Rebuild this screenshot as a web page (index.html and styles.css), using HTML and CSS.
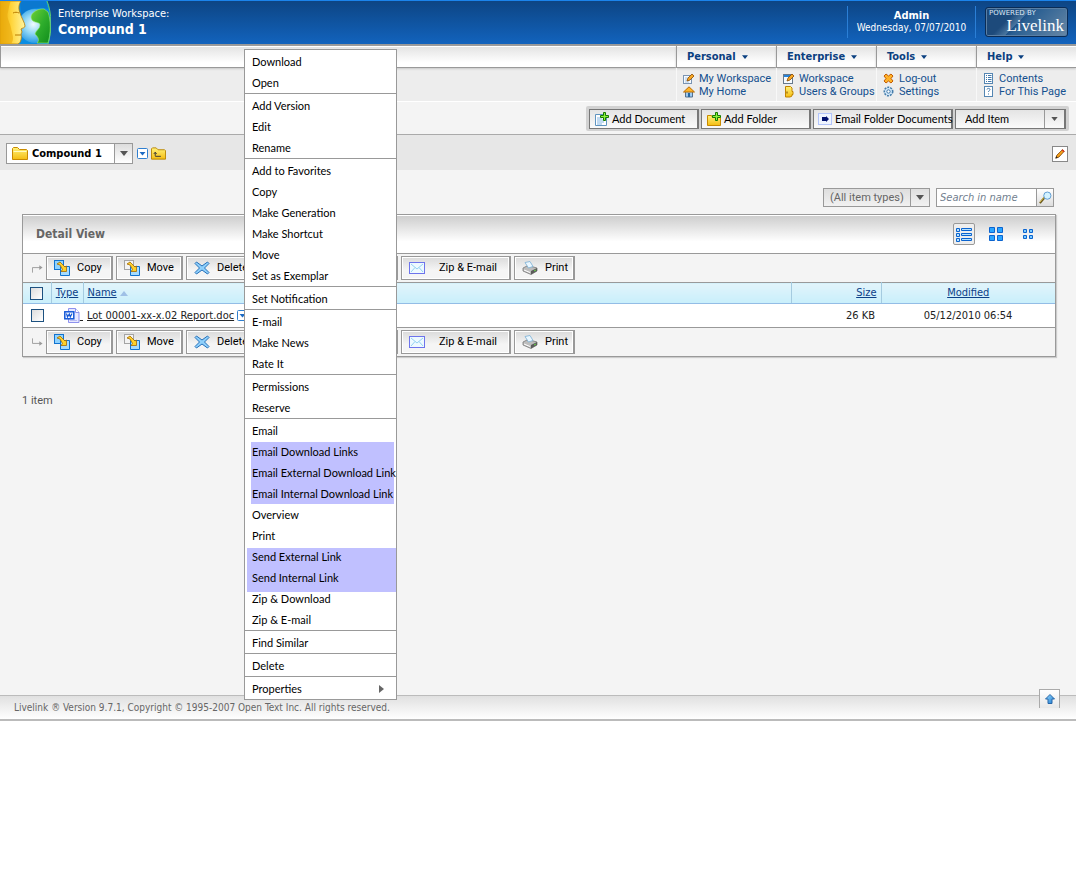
FILE: index.html
```html
<!DOCTYPE html>
<html lang="en">
<head>
<meta charset="utf-8">
<title>Compound 1</title>
<link rel="stylesheet" href="styles.css">
</head>
<body>
<svg class="sprite" aria-hidden="true">
  <defs>
    <linearGradient id="gold" x1="0" y1="0" x2="0" y2="1"><stop offset="0" stop-color="#fff27a"/><stop offset="1" stop-color="#f5bd12"/></linearGradient>
    <linearGradient id="sky" x1="0" y1="0" x2="1" y2="1"><stop offset="0" stop-color="#9adcff"/><stop offset="1" stop-color="#1b78d0"/></linearGradient>
  </defs>
  <symbol id="i-down" viewBox="0 0 8 5"><path d="M0 0h8L4 5z"/></symbol>
  <symbol id="i-folder" viewBox="0 0 16 13"><path d="M.5 12.500V1.500l1-1h4l2 2h7l1 1v9z" fill="url(#gold)" stroke="#c98a00"/><path d="M1.500 4.500h13" stroke="#fffbc0"/></symbol>
  <symbol id="i-up-folder" viewBox="0 0 16 13"><path d="M.5 12.500V1.500l1-1h4l2 2h7l1 1v9z" fill="url(#gold)" stroke="#b98500"/><path d="M4.500 9V6M3 7l1.500-2L6 7M4.500 9.500h6" fill="none" stroke="#333"/></symbol>
  <symbol id="i-boxdown" viewBox="0 0 11 11"><rect x=".5" y=".5" width="10" height="10" rx="1" fill="#fff" stroke="#2f7fd0"/><path d="M2.500 4h6L5.500 7.500z" fill="#1c6bc4"/></symbol>
  <symbol id="i-pencil" viewBox="0 0 12 12"><path d="M1 11l1.200-3.500L9 .800l2 2L4.500 9.800z" fill="#f9a51a" stroke="#7a3b00"/><path d="M8.500 1l2.500 2.300" stroke="#d8301c" stroke-width="1.500"/><path d="M.5 11.500l1-2.800 1.800 1.600z" fill="#222"/></symbol>
  <symbol id="i-sheet" viewBox="0 0 12 12"><rect x=".5" y="2.500" width="8" height="8" fill="#f5faff" stroke="#7a94b3"/><path d="M2 5h5M2 7h5M2 9h4" stroke="#a8c4e2"/><path d="M4 8l1-3 4-4 2 2-4 4z" fill="#f7a825" stroke="#8a4a00" stroke-width=".8"/></symbol>
  <symbol id="i-window" viewBox="0 0 12 12"><rect x=".5" y="1.500" width="9" height="9" fill="#f5faff" stroke="#66788c"/><path d="M1 3h8" stroke="#2582d8" stroke-width="2"/><path d="M4 8l1-3 4-4 2 2-4 4z" fill="#f7a825" stroke="#8a4a00" stroke-width=".8"/></symbol>
  <symbol id="i-home" viewBox="0 0 12 12"><path d="M2.500 5.500h7v5.500h-7z" fill="#9ccaf2" stroke="#55708d"/><path d="M5 7h2v4H5z" fill="#27669f"/><path d="M.5 6L6 .800 11.500 6z" fill="#ffb52a" stroke="#b96c00"/></symbol>
  <symbol id="i-door" viewBox="0 0 12 12"><path d="M2.500 .5h5l1.500 1.500v3.500h1v3H9v1.500l-2 1H2.500z" fill="url(#gold)" stroke="#c08300"/><path d="M4 5.500v2" stroke="#7a4c00"/></symbol>
  <symbol id="i-x" viewBox="0 0 12 12"><path d="M3 1l2.500 2L8 1l2 2-2 2.500L10 8l-2 2-2.500-2L3 10 1 8l2-2.500L1 3z" fill="#ffb32a" stroke="#c45c00"/></symbol>
  <symbol id="i-gear" viewBox="0 0 12 12"><circle cx="5.500" cy="5.500" r="4.200" fill="#d5eafb" stroke="#467dab" stroke-width="1.600" stroke-dasharray="2 1"/><circle cx="5.500" cy="5.500" r="1.700" fill="#fff" stroke="#3f78aa"/></symbol>
  <symbol id="i-contents" viewBox="0 0 12 12"><rect x="1.500" y=".5" width="8" height="10" fill="#fff" stroke="#5586b2"/><path d="M3 2.500h1M5 2.500h3.500M3 4.500h1M5 4.500h3.500M3 6.500h1M5 6.500h3.500M3 8.500h1M5 8.500h3.500" stroke="#4178ab"/></symbol>
  <symbol id="i-help" viewBox="0 0 12 12"><rect x="1.500" y=".5" width="8" height="10" fill="#fff" stroke="#5586b2"/><path d="M4 3.500c0-1.500 3-1.500 3 0 0 1-1.500 1-1.500 2.500M5.500 7.500v1" fill="none" stroke="#4178ab"/></symbol>
  <symbol id="i-adddoc" viewBox="0 0 16 16"><path d="M1.500 3.500h8l3 3v8h-11z" fill="#fff" stroke="#5f94c0"/><path d="M3 7h5M3 9h7M3 11h7M3 13h5" stroke="#82b5e4"/><path d="M9.500 1.500h2v3h3v2h-3v3h-2v-3h-3v-2h3z" fill="#8df23c" stroke="#177a00"/></symbol>
  <symbol id="i-addfolder" viewBox="0 0 16 16"><path d="M1.500 14.500v-10h4l1 2h8v8z" fill="url(#gold)" stroke="#c98a00"/><path d="M9.500 1.500h2v3h3v2h-3v3h-2v-3h-3v-2h3z" fill="#8df23c" stroke="#177a00"/></symbol>
  <symbol id="i-emailfolder" viewBox="0 0 14 12"><rect x=".5" y=".5" width="13" height="11" fill="#eef4ff" stroke="#b2c4fa"/><path d="M4 4h4V3l3 3-3 3V8H4z" fill="#00106e"/></symbol>
  <symbol id="i-lens" viewBox="0 0 14 14"><path d="M1 13l5-6" stroke="#6b5a20" stroke-width="2.200"/><path d="M1 12l5-6" stroke="#e3c64e"/><circle cx="9" cy="5" r="3.900" fill="#d3f2ff" stroke="#5b98d0"/></symbol>
  <symbol id="i-list" viewBox="0 0 16 15"><g fill="#b5e2ff" stroke="#0a63cf"><path d="M.5 1.500h3v3h-3zM5.500 1.500h10v2h-10zM.5 6.500h3v3h-3zM5.500 6.500h10v2h-10zM.5 11.500h3v3h-3zM5.500 11.500h10v2h-10z"/></g></symbol>
  <symbol id="i-tiles" viewBox="0 0 14 14"><g fill="#29a5ff" stroke="#0a63cf"><path d="M.5.500h5v5h-5zM8.500.500h5v5h-5zM.5 8.500h5v5h-5zM8.500 8.500h5v5h-5z"/></g></symbol>
  <symbol id="i-small" viewBox="0 0 10 10"><g fill="#7cccff" stroke="#0a63cf"><path d="M.5.500h3v3h-3zM6.500.500h3v3h-3zM.5 6.500h3v3h-3zM6.500 6.500h3v3h-3z"/></g></symbol>
  <symbol id="i-copy" viewBox="0 0 16 16"><rect x=".5" y=".5" width="9" height="9" fill="#8ed2ff" stroke="#1173cf"/><path d="M6.500 6.500h9v9h-9z" fill="#a6dcff" stroke="#1173cf"/><path d="M3 4l3-2 5 5 1.500-1v5.500H7L8.500 9.500 6 5z" fill="#ffd12a" stroke="#a56a00" stroke-width=".8"/></symbol>
  <symbol id="i-move" viewBox="0 0 16 16"><rect x=".5" y=".5" width="9" height="9" fill="#f3f3f3" stroke="#a4a4a4"/><path d="M6.500 6.500h9v9h-9z" fill="#a6dcff" stroke="#1173cf"/><path d="M3 4l3-2 5 5 1.500-1v5.500H7L8.500 9.500 6 5z" fill="#ffd12a" stroke="#a56a00" stroke-width=".8"/></symbol>
  <symbol id="i-delete" viewBox="0 0 16 14"><path d="M2.500 1L8 5 13.500 1l1.500 1.500L10.500 7l4.500 4.500-1.500 1.500L8 9l-5.500 4L1 11.500 5.500 7 1 2.500z" fill="#8fd0fb" stroke="#246fb9"/></symbol>
  <symbol id="i-mail" viewBox="0 0 16 12"><rect x=".5" y=".5" width="15" height="11" fill="#eefaff" stroke="#6d74ec"/><path d="M2 2l6 5 6-5M2 10l4-4.500M14 10l-4-4.500" fill="none" stroke="#93d2f3"/></symbol>
  <symbol id="i-print" viewBox="0 0 16 14"><path d="M1 7l5-2.500L15 7v3l-6 3.500L1 10z" fill="#bdbdbd" stroke="#777" stroke-width=".8"/><path d="M9 10l6-3v3l-6 3.500z" fill="#5b5b5b"/><path d="M3 1.500L8 .5l3 5-4.500 1.500z" fill="#eaf7ff" stroke="#78aed4" stroke-width=".8"/><path d="M2 9l6 2.500" stroke="#fff"/><path d="M12 10l2-1" stroke="#65d747"/></symbol>
  <symbol id="i-turn" viewBox="0 0 12 9"><path d="M.5 9V3.500H9" fill="none" stroke="#999"/><path d="M8 1l3.500 2.500L8 6z" fill="#999"/></symbol>
  <symbol id="i-word" viewBox="0 0 16 16"><path d="M4.500.500h7l3.500 4v10H4.500z" fill="#e8e8ff" stroke="#8e92ee"/><path d="M11.500.500v4H15" fill="#fff" stroke="#8e92ee"/><path d="M6 12.500h7" stroke="#b9bdf4"/><rect x=".8" y="3.800" width="9" height="7" fill="#fff" stroke="#1458d8" stroke-width="1.500"/><path d="M2.500 5.500l1 3.500 1.800-3 1 3L8 5.500" fill="none" stroke="#1458d8" stroke-width="1.200"/></symbol>
  <symbol id="i-top" viewBox="0 0 10 10"><path d="M5 .5L9.500 5H7v4.500H3V5H.5z" fill="url(#sky)" stroke="#2766a8"/></symbol>
</svg>

<div class="app">
  <header class="banner">
    <svg class="logo" viewBox="0 0 51 43" role="img" aria-label="Face and globe">
      <defs>
        <linearGradient id="face" x1="0" y1="0" x2="1" y2="0"><stop offset="0" stop-color="#e9a800"/><stop offset=".45" stop-color="#ffd43a"/><stop offset="1" stop-color="#fff5a0"/></linearGradient>
        <radialGradient id="sea" cx=".45" cy=".45" r=".55"><stop offset="0" stop-color="#f0fbff"/><stop offset=".5" stop-color="#8fd6f5"/><stop offset="1" stop-color="#2b9be4"/></radialGradient>
        <linearGradient id="land" x1="0" y1="0" x2="1" y2="1"><stop offset="0" stop-color="#6fcf35"/><stop offset=".5" stop-color="#2fae2c"/><stop offset="1" stop-color="#118d1c"/></linearGradient>
      </defs>
      <path d="M0 0h47c5 12 5 30 1 43H0z" fill="#0a8de2"/>
      <path d="M20 0h26l2 8c-10-3-22 0-27 7z" fill="#0b78cf"/>
      <circle cx="35" cy="25" r="17" fill="url(#sea)"/>
      <path d="M33 12c3-3 7-4.500 11-4l4 3c3 8 3 22 0 31H37c3-3 1-6-2-9 1-4 5-5 5-9 0-3-4-2-7-4-3-3-2-6 0-8z" fill="url(#land)" stroke="#9ae76a" stroke-width=".6"/>
      <path d="M47 0c5 12 5 30 1 43" fill="none" stroke="#5ed06a"/>
      <path d="M0 0h21c-2 3-3 7-1 12 1 4 5 10 5 13 0 2-3 2-4 3l1 3-1 2c1 3 0 9-3 10H0z" fill="url(#face)" stroke="#b97b00" stroke-width=".8"/>
      <path d="M11 0H0v43h11c4-5 1-10 0-16s-5-10-3-16c1-4 1-8 3-11z" fill="#e9ab10" opacity=".65"/>
      <path d="M13 12c2-1 4-1 6 0M15 34h6" fill="none" stroke="#b97b00"/>
    </svg>
    <div class="place"><span>Enterprise Workspace:</span><h1>Compound 1</h1></div>
    <div class="user"><strong>Admin</strong><span>Wednesday, 07/07/2010</span></div>
    <div class="powered"><div class="badge"><small>POWERED BY</small><b>Livelink</b></div></div>
  </header>

  <nav class="menubar">
    <div class="blank"><div class="tab"></div></div>
    <section><button class="tab">Personal <svg><use href="#i-down"/></svg></button>
      <ul><li><svg><use href="#i-sheet"/></svg><a href="#">My Workspace</a></li><li><svg><use href="#i-home"/></svg><a href="#">My Home</a></li></ul></section>
    <section><button class="tab">Enterprise <svg><use href="#i-down"/></svg></button>
      <ul><li><svg><use href="#i-window"/></svg><a href="#">Workspace</a></li><li><svg><use href="#i-door"/></svg><a href="#">Users &amp; Groups</a></li></ul></section>
    <section><button class="tab">Tools <svg><use href="#i-down"/></svg></button>
      <ul><li><svg><use href="#i-x"/></svg><a href="#">Log-out</a></li><li><svg><use href="#i-gear"/></svg><a href="#">Settings</a></li></ul></section>
    <section><button class="tab">Help <svg><use href="#i-down"/></svg></button>
      <ul><li><svg><use href="#i-contents"/></svg><a href="#">Contents</a></li><li><svg><use href="#i-help"/></svg><a href="#">For This Page</a></li></ul></section>
  </nav>

  <div class="addbar">
    <div class="addgroup">
      <button class="add"><svg class="s16"><use href="#i-adddoc"/></svg>Add Document</button>
      <button class="add"><svg class="s16"><use href="#i-addfolder"/></svg>Add Folder</button>
      <button class="add wide"><svg class="mailicon"><use href="#i-emailfolder"/></svg>Email Folder Documents</button>
      <div class="add item"><select aria-label="Add Item"><option>Add Item</option></select><svg class="arrow"><use href="#i-down"/></svg></div>
    </div>
  </div>

  <div class="crumbs">
    <div class="crumb"><button class="name"><svg><use href="#i-folder"/></svg>Compound 1</button><button class="drop" aria-label="Open path"><svg class="arrow"><use href="#i-down"/></svg></button></div>
    <button class="bare" aria-label="Item menu"><svg class="s11"><use href="#i-boxdown"/></svg></button>
    <button class="bare" aria-label="Parent folder"><svg class="folder"><use href="#i-up-folder"/></svg></button>
    <button class="edit" aria-label="Edit"><svg><use href="#i-pencil"/></svg></button>
  </div>

  <main>
    <div class="filters">
      <div class="types"><select aria-label="Item types"><option>(All item types)</option></select><svg class="arrow"><use href="#i-down"/></svg></div>
      <div class="search"><input type="text" placeholder="Search in name" aria-label="Search in name"><button aria-label="Search"><svg><use href="#i-lens"/></svg></button></div>
    </div>

    <div class="panel">
      <div class="panelhead">
        <h2>Detail View</h2>
        <div class="views">
          <button class="on" aria-label="Detail"><svg class="v1"><use href="#i-list"/></svg></button>
          <button aria-label="Large icons"><svg class="v2"><use href="#i-tiles"/></svg></button>
          <button aria-label="Small icons"><svg class="v3"><use href="#i-small"/></svg></button>
        </div>
      </div>
      <div class="actions">
        <svg class="turn"><use href="#i-turn"/></svg>
        <button><svg class="s16"><use href="#i-copy"/></svg>Copy</button>
        <button><svg class="s16"><use href="#i-move"/></svg>Move</button>
        <button class="del"><svg class="s16"><use href="#i-delete"/></svg>Delete</button>
        <button class="zip"><svg class="s16"><use href="#i-mail"/></svg>Zip &amp; E-mail</button>
        <button class="print"><svg class="s16"><use href="#i-print"/></svg>Print</button>
      </div>
      <table>
        <colgroup><col class="c1"><col class="c2"><col><col class="c4"><col class="c5"></colgroup>
        <thead><tr><th><input type="checkbox" aria-label="Select all"></th><th><a href="#">Type</a></th><th class="left"><a href="#">Name</a> <svg class="sort" viewBox="0 0 8 5"><path d="M0 5h8L4 0z"/></svg></th><th class="right"><a href="#">Size</a></th><th><a href="#">Modified</a></th></tr></thead>
        <tbody><tr><td><input type="checkbox" aria-label="Select Lot 00001-xx-x.02 Report.doc"></td><td class="right doc"><a href="#"><svg class="s16"><use href="#i-word"/></svg>&nbsp;</a></td><td class="left"><a href="#">Lot 00001-xx-x.02 Report.doc</a> <svg class="s11"><use href="#i-boxdown"/></svg></td><td class="right">26 KB</td><td>05/12/2010 06:54</td></tr></tbody>
      </table>
      <div class="actions">
        <svg class="turn flip"><use href="#i-turn"/></svg>
        <button><svg class="s16"><use href="#i-copy"/></svg>Copy</button>
        <button><svg class="s16"><use href="#i-move"/></svg>Move</button>
        <button class="del"><svg class="s16"><use href="#i-delete"/></svg>Delete</button>
        <button class="zip"><svg class="s16"><use href="#i-mail"/></svg>Zip &amp; E-mail</button>
        <button class="print"><svg class="s16"><use href="#i-print"/></svg>Print</button>
      </div>
    </div>
    <p class="count">1 item</p>
  </main>

  <footer><span>Livelink ® Version 9.7.1, Copyright © 1995-2007 Open Text Inc. All rights reserved.</span><button class="top" aria-label="Back to top"><svg><use href="#i-top"/></svg></button></footer>

  <div class="popup" role="menu">
    <div class="group"><button role="menuitem">Download</button><button role="menuitem">Open</button></div>
    <div class="group"><button role="menuitem">Add Version</button><button role="menuitem">Edit</button><button role="menuitem">Rename</button></div>
    <div class="group"><button role="menuitem">Add to Favorites</button><button role="menuitem">Copy</button><button role="menuitem">Make Generation</button><button role="menuitem">Make Shortcut</button><button role="menuitem">Move</button><button role="menuitem">Set as Exemplar</button></div>
    <div class="group"><button role="menuitem">Set Notification</button></div>
    <div class="group"><button role="menuitem">E-mail</button><button role="menuitem">Make News</button><button role="menuitem">Rate It</button></div>
    <div class="group"><button role="menuitem">Permissions</button><button role="menuitem">Reserve</button></div>
    <div class="group"><button role="menuitem">Email</button>
      <div class="marked email"><button role="menuitem">Email Download Links</button><button role="menuitem">Email External Download Link</button><button role="menuitem">Email Internal Download Link</button></div>
      <button role="menuitem">Overview</button><button role="menuitem">Print</button>
      <div class="marked send"><button role="menuitem">Send External Link</button><button role="menuitem">Send Internal Link</button></div>
      <button role="menuitem">Zip &amp; Download</button><button role="menuitem">Zip &amp; E-mail</button></div>
    <div class="group"><button role="menuitem">Find Similar</button></div>
    <div class="group"><button role="menuitem">Delete</button></div>
    <div class="group"><button role="menuitem" class="sub">Properties<svg viewBox="0 0 5 8"><path d="M0 0v8l5-4z"/></svg></button></div>
  </div>
</div>
</body>
</html>
```

FILE: styles.css
```css
* { box-sizing: border-box; }
body { margin: 0; background: #fff; color: #222; font: 11px/14px "DejaVu Sans Condensed", Tahoma, "DejaVu Sans", sans-serif; }
button, select, input { font: inherit; color: inherit; margin: 0; padding: 0; border: 0; background: none; border-radius: 0; }
select { appearance: none; }
h1, h2, p, ul { margin: 0; padding: 0; }
ul { list-style: none; }
a { color: #0b4088; }
svg { display: block; flex: none; }
.sprite { position: absolute; width: 0; height: 0; }
.s16 { width: 16px; height: 16px; }
.s11 { width: 11px; height: 11px; }
.arrow { width: 8px; height: 5px; fill: #555; }
.app { position: relative; background: #f4f4f4; }

.banner { display: flex; height: 44px; color: #fff; background: linear-gradient(#0d4584, #1263bd); border-top: 1px solid #1b84ec; }
.logo { width: 51px; height: 43px; }
.place { flex: 1; padding: 6px 0 0 7px; }
.place h1 { font-size: 14px; line-height: 16px; }
.user { display: flex; flex-direction: column; align-items: center; width: 129px; height: 32px; margin-top: 5px; padding-top: 4px; border-left: 1px solid #2b7fd6; border-right: 1px solid #2b7fd6; font-size: 10px; line-height: 12px; }
.user strong { font-size: 11px; }
.powered { padding: 6px 8px 0 9px; }
.badge { display: flex; flex-direction: column; width: 83px; height: 30px; padding: 1px 3px; border: 1px solid #0a2c56; border-radius: 3px; background: linear-gradient(135deg, #1d4a7b 30%, #49759f 42%, #1f5288 43%, #2a5f92 48%, #6888a6); box-shadow: inset 0 0 0 1px #5a7fa4; }
.badge small { font: 7px/9px "DejaVu Sans", sans-serif; color: #dce8f4; }
.badge b { align-self: flex-end; font: 17px/16px "Liberation Serif", serif; }

.menubar { display: flex; border-top: 2px solid #999; background: #ededed; }
.menubar section { width: 100px; }
.blank { flex: 1; }
.tab { display: flex; align-items: center; width: 100%; height: 22px; padding-left: 10px; gap: 6px; font-weight: bold; color: #0b4080; background: linear-gradient(#e2e2e2, #fff 80%); border-left: 1px solid #999; border-bottom: 1px solid #999; box-shadow: inset 0 1px #fff, 0 1px 2px #c6c6c6; }
.tab svg { width: 6px; height: 4px; fill: #0b4080; }
.menubar ul { height: 33px; padding: 4px 0 0 6px; border-left: 1px solid #f8f8f8; font-family: Roboto, sans-serif; }
.menubar li { display: flex; align-items: center; gap: 4px; height: 13px; }
.menubar li svg { width: 12px; height: 12px; }
.menubar a { color: #14508f; text-decoration: none; white-space: nowrap; }

.addbar { display: flex; justify-content: flex-end; height: 34px; padding: 4px 7px 0; border-top: 1px solid #fff; border-bottom: 1px solid #aaa; background: #f4f4f4; }
.addgroup { display: flex; gap: 2px; height: 25px; padding: 3px; background: #d2d2d2; border-radius: 2px; }
.add { display: flex; align-items: center; width: 110px; height: 20px; padding-left: 4px; gap: 2px; font-family: Lato, sans-serif; font-size: 11px; color: #000; white-space: nowrap; border: 1px solid #777; border-right-width: 2px; background: linear-gradient(#e4e4e4, #fafafa); }
.add.wide { width: 140px; gap: 3px; }
.mailicon { width: 14px; height: 12px; }
.add.item { padding: 0; gap: 0; width: 111px; }
.add select { flex: 1; min-width: 0; height: 18px; padding-left: 9px; }
.add .arrow { width: 20px; height: 18px; padding: 7px 6px; border-left: 1px solid #999; }

.crumbs { display: flex; align-items: center; height: 35px; padding: 2px 8px 0 6px; background: #e7e7e7; }
.crumb { display: flex; width: 127px; height: 21px; margin-right: 4px; border: 1px solid #999; background: #fff; }
.crumb .name { display: flex; flex: 1; align-items: center; gap: 4px; padding-left: 5px; font-size: 11px; font-weight: bold; color: #000; white-space: nowrap; }
.crumb .name svg { width: 16px; height: 13px; }
.drop { display: grid; place-items: center; width: 18px; border-left: 1px solid #999; background: linear-gradient(#ddd, #fff); }
.bare { margin-right: 3px; }
.folder { width: 15px; height: 13px; }
.edit { display: grid; place-items: center; width: 16px; height: 16px; margin-left: auto; border: 1px solid #888; background: #fff; }
.edit svg { width: 10px; height: 10px; }

main { height: 525px; padding: 18px 20px 0 22px; }
.filters { display: flex; justify-content: flex-end; gap: 6px; height: 19px; padding-right: 2px; margin-bottom: 7px; }
.types { display: flex; width: 107px; border: 1px solid #999; color: #666; font-family: Roboto, sans-serif; background: linear-gradient(#dedede, #f1f1f1); }
.types select { flex: 1; min-width: 0; padding-left: 6px; }
.types .arrow { width: 19px; height: 17px; padding: 6px 5px; border-left: 1px solid #999; }
.search { display: flex; width: 118px; border: 1px solid #999; background: #fff; }
.search input { flex: 1; min-width: 0; padding-left: 3px; font-style: italic; outline: 0; }
.search input::placeholder { color: #71808f; opacity: 1; }
.search button { display: grid; place-items: center; width: 17px; border-left: 1px solid #999; background: linear-gradient(#fff, #ddd); }
.search svg { width: 13px; height: 13px; }

.panel { border: 1px solid #999; background: #f4f4f4; box-shadow: 1px 1px 1px #ccc; }
.panelhead { display: flex; align-items: center; height: 39px; padding: 0 16px 0 13px; background: linear-gradient(#ccc, #fff 70%); border-bottom: 1px solid #999; box-shadow: inset 0 1px #fff; }
.panelhead h2 { flex: 1; font-size: 12px; color: #666; }
.views { display: flex; gap: 10px; }
.views button { display: grid; place-items: center; width: 22px; height: 22px; border-radius: 2px; }
.views .on { border: 1px solid #999; background: #eee; }
.v1 { width: 16px; height: 15px; }
.v2 { width: 14px; height: 14px; }
.v3 { width: 10px; height: 10px; }
.actions { display: flex; align-items: center; gap: 3px; height: 28px; padding-left: 9px; }
.turn { width: 11px; height: 9px; }
.flip { transform: scaleY(-1); }
.actions button { display: flex; align-items: center; gap: 7px; width: 67px; height: 24px; padding-left: 7px; color: #000; font-family: Roboto, sans-serif; border: 1px solid #999; border-right-width: 2px; background: linear-gradient(#dadada, #f5f5f5 60%); box-shadow: inset 0 0 0 1px #fff; white-space: nowrap; }
.actions .del { width: 212px; }
.actions .zip { width: 110px; gap: 14px; }
.actions .print { width: 61px; }

table { width: 100%; table-layout: fixed; border-collapse: collapse; border-top: 1px solid #999; border-bottom: 1px solid #999; background: #fff; }
.c1 { width: 28px; }
.c2 { width: 32px; }
.c4 { width: 90px; }
.c5 { width: 174px; }
th { height: 21px; padding: 0; font-weight: normal; background: linear-gradient(#e2f4fb, #c8effb); border-left: 1px solid #a5cbe0; border-bottom: 1px solid #93bde6; }
th:first-child { border-left: 0; }
td { height: 24px; padding: 0; text-align: center; }
td a { color: #222; }
.left { text-align: left; padding-left: 4px; }
td.right { text-align: right; padding-right: 6px; }
th.right { text-align: right; padding-right: 4px; }
th svg, td svg { display: inline-block; vertical-align: middle; }
.sort { width: 8px; height: 5px; fill: #9fc0e6; }
input[type=checkbox] { display: block; appearance: none; width: 13px; height: 13px; margin: 0 auto; border: 1px solid #1c5180; background: linear-gradient(135deg, #dcdcdc, #fff); }
td.doc { padding-right: 0; }
.count { margin-top: 37px; color: #555; font-family: Roboto, sans-serif; }

footer { display: flex; height: 26px; padding: 4px 16px 0 14px; color: #666; font-size: 10px; line-height: 15px; border-top: 1px solid #bbb; border-bottom: 2px solid #bbb; background: linear-gradient(#e0e0e0, #fff); }
footer span { flex: 1; }
.top { display: grid; place-items: center; width: 21px; height: 19px; margin-top: -11px; border: 1px solid #aaa; border-bottom: 0; background: linear-gradient(#fff, #e8e8e8); }
.top svg { width: 10px; height: 10px; }

.popup { position: absolute; left: 244px; top: 49px; width: 153px; border: 1px solid #999; border-top: 0; background: #fff; color: #000; font-family: Lato, sans-serif; }
.group { padding-top: 1px; border-top: 1px solid #999; }
.popup button { display: flex; align-items: center; width: 100%; height: 21px; padding-left: 7px; white-space: nowrap; }
.popup .sub { justify-content: space-between; padding-right: 12px; }
.sub svg { width: 5px; height: 8px; fill: #666; }
.marked { position: relative; z-index: 0; }
.marked::before { content: ""; position: absolute; z-index: -1; inset: 1px 2px 0 6px; background: #c0c0ff; }
.send::before { inset: 2px 0 -4px 2px; }
```
